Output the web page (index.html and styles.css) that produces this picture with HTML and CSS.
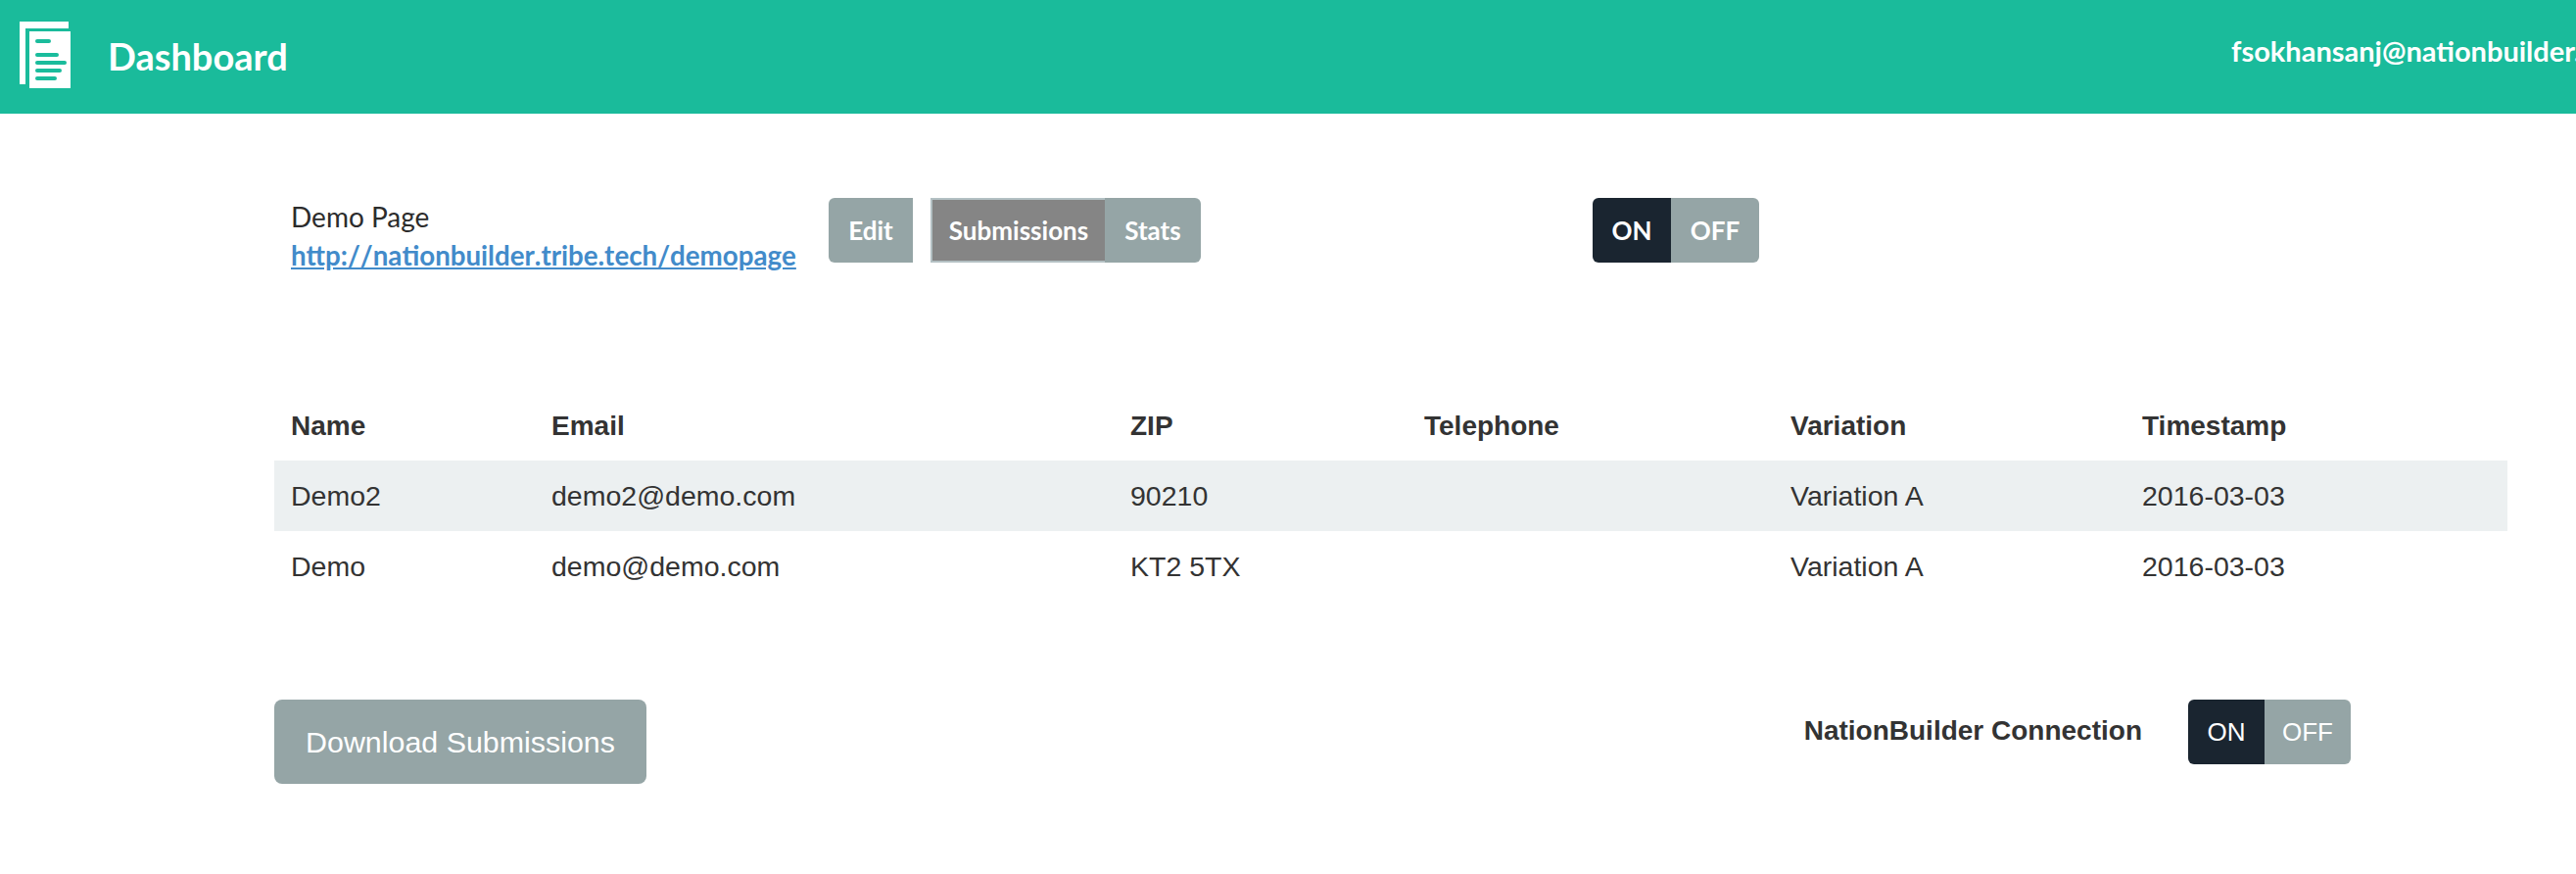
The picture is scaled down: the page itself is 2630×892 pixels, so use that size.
FILE: index.html
```html
<!DOCTYPE html>
<html lang="en">
  <head>
    <meta charset="UTF-8" />
    <title>Dashboard</title>
    <link rel="stylesheet" href="styles.css">
  </head>

  <body>
    <div class="top">
      <svg class="logo" width="52" height="68" viewBox="0 0 52 68">
        <path d="M0 0H50V7H6V64H0Z" fill="#fff" />
        <path d="M10 10H52V68H10Z" fill="#fff" />
        <g fill="#1abc9c">
          <rect x="16" y="18" width="16" height="4" rx="2" />
          <rect x="16" y="32" width="24" height="4" rx="2" />
          <rect x="16" y="40" width="32" height="4" rx="2" />
          <rect x="16" y="48" width="27" height="4" rx="2" />
          <rect x="16" y="56" width="22" height="4" rx="2" />
        </g>
      </svg>
      <div class="title">Dashboard</div>
      <div class="user">fsokhansanj@nationbuilder.com</div>
    </div>

    <div class="page">
      <div class="toolbar">
        <div class="page-name">
          <div>Demo Page</div>
          <a href="#">http://nationbuilder.tribe.tech/demopage</a>
        </div>
        <div class="btn edit">Edit</div>
        <div class="group">
          <div class="btn active">Submissions</div>
          <div class="btn stats">Stats</div>
        </div>
        <div class="switch top-switch">
          <div class="on">ON</div>
          <div class="off">OFF</div>
        </div>
      </div>

      <table>
        <tr>
          <th class="c1">Name</th>
          <th class="c2">Email</th>
          <th class="c3">ZIP</th>
          <th class="c4">Telephone</th>
          <th class="c5">Variation</th>
          <th>Timestamp</th>
        </tr>
        <tr class="odd">
          <td>Demo2</td>
          <td>demo2@demo.com</td>
          <td>90210</td>
          <td></td>
          <td>Variation A</td>
          <td>2016-03-03</td>
        </tr>
        <tr>
          <td>Demo</td>
          <td>demo@demo.com</td>
          <td>KT2 5TX</td>
          <td></td>
          <td>Variation A</td>
          <td>2016-03-03</td>
        </tr>
      </table>

      <div class="bottom">
        <div class="download">Download Submissions</div>
        <div class="connection">
          <b>NationBuilder Connection</b>
          <div class="switch small">
            <div class="on">ON</div>
            <div class="off">OFF</div>
          </div>
        </div>
      </div>
    </div>
  </body>
</html>
```

FILE: styles.css
```css
* {
  margin: 0;
  padding: 0;
  box-sizing: border-box;
}

html,
body {
  overflow: hidden;
}

body {
  background-color: #fff;
  color: #333;
  font-family: "Liberation Sans", Arial, sans-serif;
}

.top {
  height: 116px;
  background-color: #1abb9b;
  color: #fff;
  display: flex;
  align-items: center;
  padding-left: 20px;
  white-space: nowrap;
  font-family: Lato, sans-serif;
  font-weight: 700;
}

.logo {
  flex-shrink: 0;
  margin-bottom: 4px;
}

.title {
  font-size: 38px;
  margin-left: 38px;
  margin-bottom: 2px;
}

.user {
  font-size: 29px;
  margin-left: auto;
  margin-bottom: 14px;
  width: 352px;
  flex-shrink: 0;
}

.page {
  padding: 86px 70px 0 280px;
}

.toolbar {
  display: flex;
  align-items: flex-start;
  font-family: Lato, sans-serif;
}

.page-name {
  width: 566px;
  padding-left: 17px;
  font-size: 28px;
  line-height: 39px;
  color: #2c2c2c;
  white-space: nowrap;
}

.page-name a {
  color: #428bca;
  font-size: 27.7px;
  font-weight: 700;
  font-kerning: none;
  text-decoration: underline;
}

.btn {
  height: 66px;
  line-height: 66px;
  background-color: #95a5a6;
  color: #fff;
  font-size: 26px;
  font-weight: 700;
  text-align: center;
}

.edit {
  width: 86px;
  border-radius: 6px 0 0 6px;
  margin-right: 18px;
}

.group {
  display: flex;
}

.active {
  width: 178px;
  line-height: 62px;
  background-color: #858585;
  border: 2px solid #b3c0c3;
  border-right: 0;
}

.stats {
  width: 98px;
  border-radius: 0 6px 6px 0;
}

.switch {
  display: flex;
  overflow: hidden;
  border-radius: 6px;
  color: #fff;
  height: 66px;
  line-height: 66px;
  font-size: 26px;
  text-align: center;
}

.top-switch {
  margin-left: 400px;
  font-weight: 700;
}

.on {
  width: 80px;
  background-color: #1a2530;
}

.off {
  width: 90px;
  background-color: #95a5a6;
}

table {
  width: 2280px;
  margin-top: 124px;
  border-collapse: collapse;
  font-size: 28.5px;
}

th,
td {
  height: 72px;
  padding: 0 17px;
  text-align: left;
}

th {
  height: 66px;
  vertical-align: top;
  padding-top: 15px;
  font-size: 28px;
}

.c1 {
  width: 266px;
}

.c2 {
  width: 591px;
}

.c3 {
  width: 300px;
}

.c4 {
  width: 374px;
}

.c5 {
  width: 359px;
}

.odd td {
  background-color: #ecf0f1;
}

.bottom {
  display: flex;
  justify-content: space-between;
  align-items: flex-start;
  width: 2120px;
  margin-top: 100px;
}

.download {
  width: 380px;
  height: 86px;
  line-height: 86px;
  border-radius: 8px;
  background-color: #95a5a6;
  color: #fff;
  text-align: center;
  font-size: 30.4px;
}

.connection {
  display: flex;
  align-items: center;
  gap: 47px;
  font-size: 28px;
}

.connection b {
  margin-bottom: 2px;
}

.small .on {
  width: 78px;
}

.small .off {
  width: 88px;
}
```
